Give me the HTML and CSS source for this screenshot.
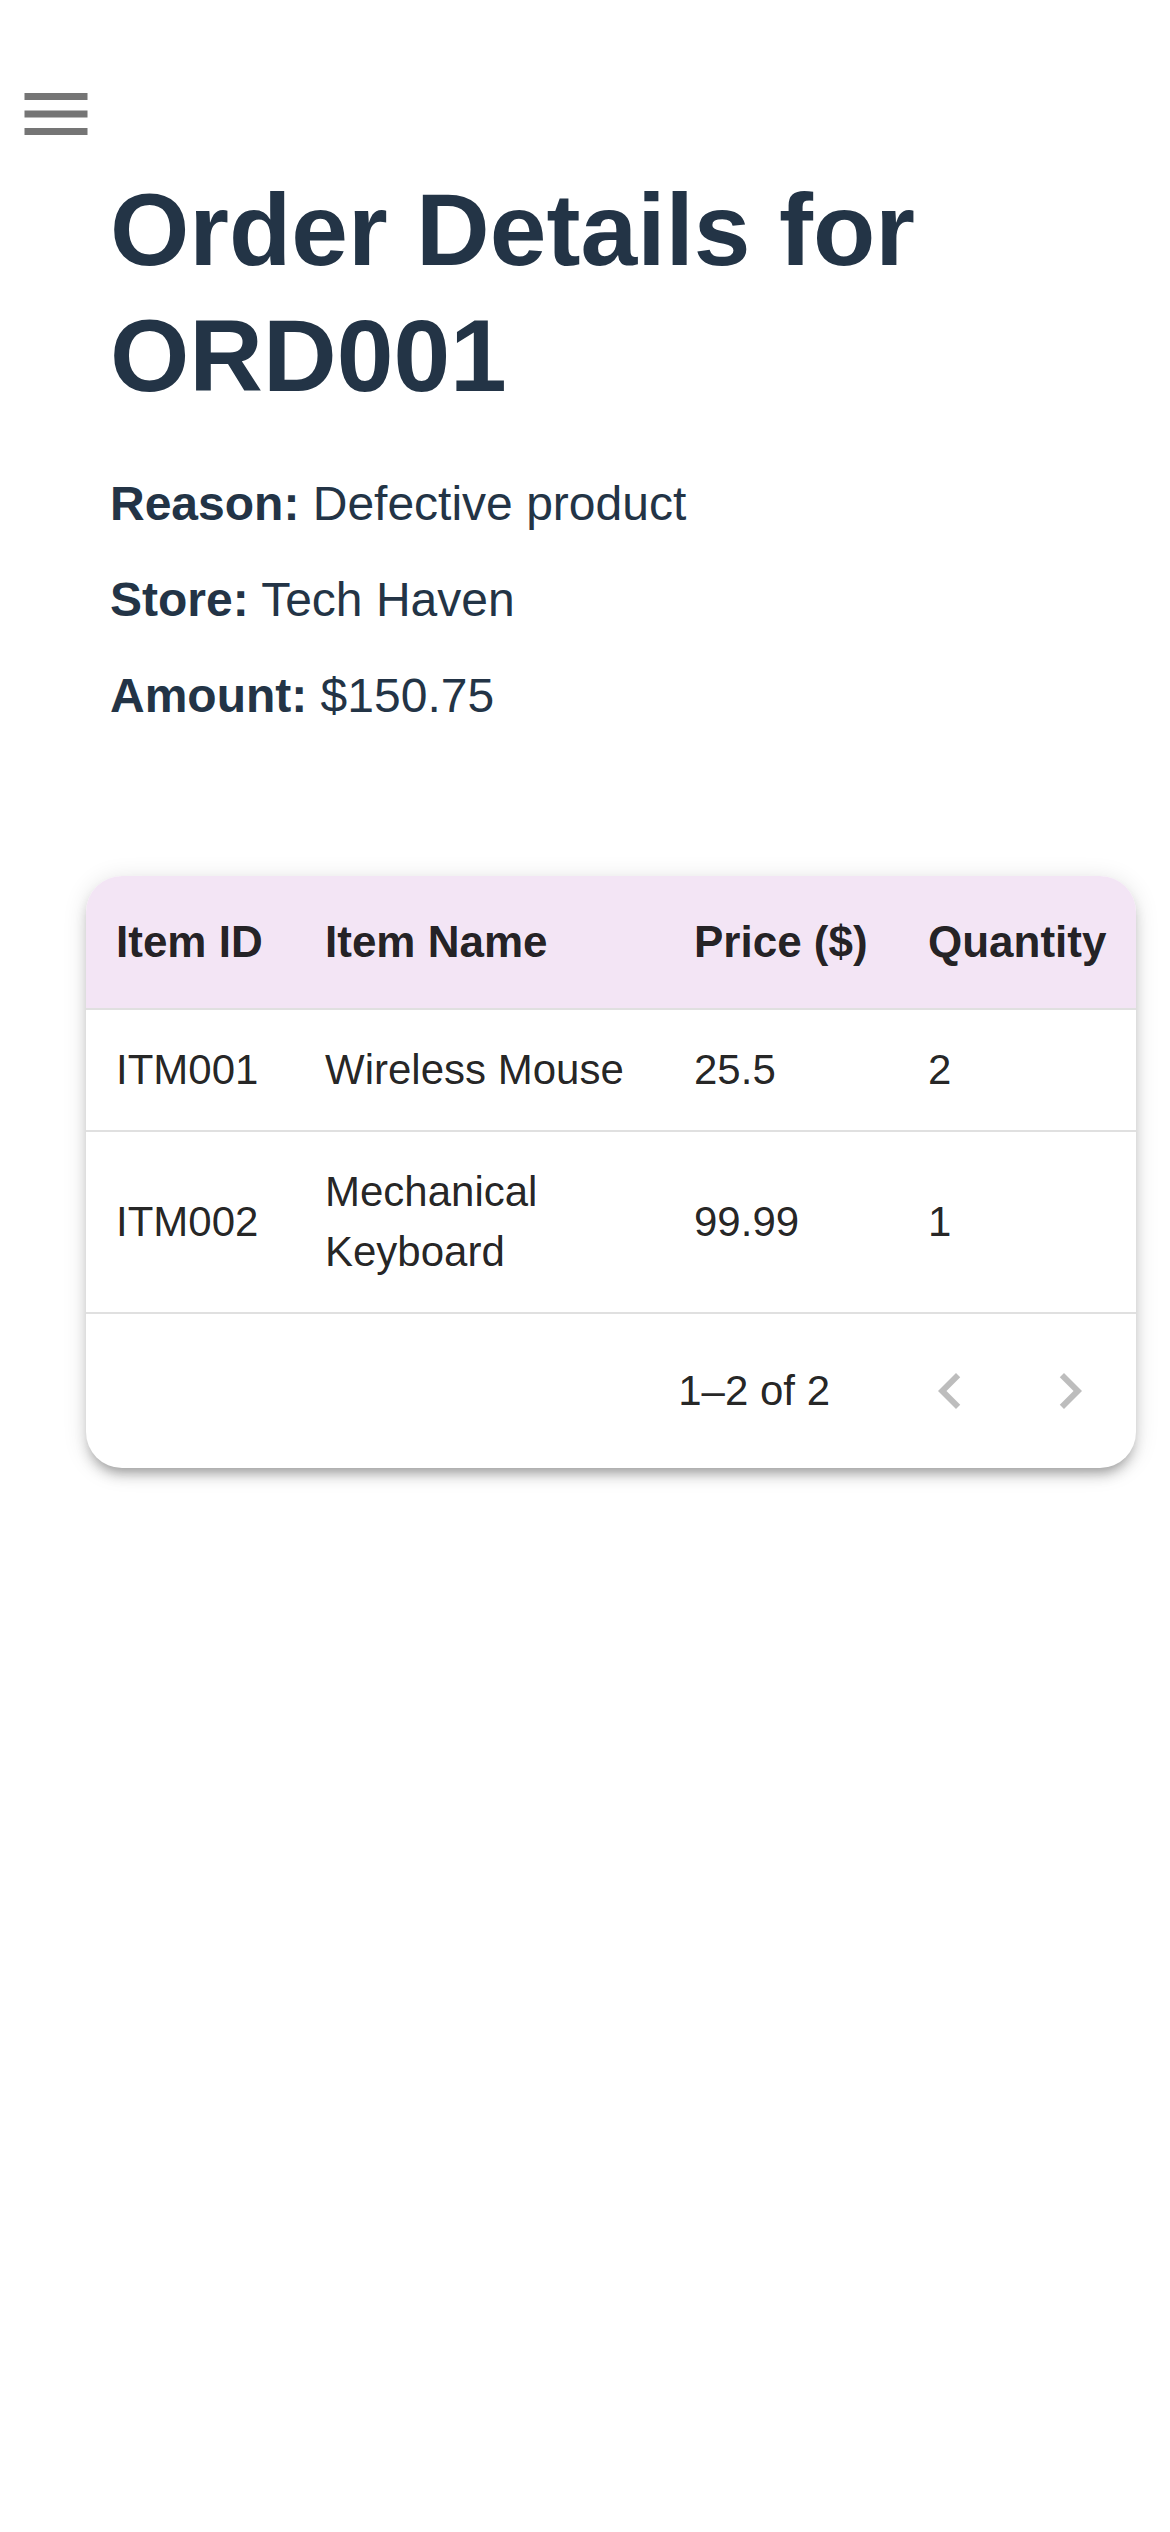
FILE: index.html
```html
<!DOCTYPE html>
<html lang="en">
<head>
<meta charset="utf-8">
<title>Order Details for ORD001</title>
<link rel="stylesheet" href="styles.css">
</head>
<body>
  <header class="topbar">
    <button class="menu-btn" aria-label="Open menu">
      <svg class="menu-icon" viewBox="0 0 24 24" aria-hidden="true"><path d="M3 18h18v-2H3zm0-5h18v-2H3zm0-7v2h18V6z"/></svg>
    </button>
  </header>

  <main class="content">
    <section class="details">
      <h1 class="title">Order Details for ORD001</h1>
      <p class="field"><strong>Reason:</strong> Defective product</p>
      <p class="field"><strong>Store:</strong> Tech Haven</p>
      <p class="field"><strong>Amount:</strong> $150.75</p>
    </section>

    <section class="card">
      <table class="items">
        <colgroup>
          <col class="col-id">
          <col class="col-name">
          <col class="col-price">
          <col class="col-qty">
        </colgroup>
        <thead>
          <tr>
            <th>Item ID</th>
            <th>Item Name</th>
            <th>Price ($)</th>
            <th>Quantity</th>
          </tr>
        </thead>
        <tbody>
          <tr>
            <td>ITM001</td>
            <td>Wireless Mouse</td>
            <td>25.5</td>
            <td>2</td>
          </tr>
          <tr>
            <td>ITM002</td>
            <td>Mechanical Keyboard</td>
            <td>99.99</td>
            <td>1</td>
          </tr>
        </tbody>
      </table>
      <div class="pagination">
        <span class="range">1–2 of 2</span>
        <div class="actions">
          <button class="page-btn" disabled aria-label="Previous page">
            <svg viewBox="0 0 24 24" aria-hidden="true"><path d="M15.41 16.59 10.83 12l4.58-4.59L14 6l-6 6 6 6z"/></svg>
          </button>
          <button class="page-btn" disabled aria-label="Next page">
            <svg viewBox="0 0 24 24" aria-hidden="true"><path d="M8.59 16.59 13.17 12 8.59 7.41 10 6l6 6-6 6z"/></svg>
          </button>
        </div>
      </div>
    </section>
  </main>
</body>
</html>
```

FILE: styles.css
```css
* {
  box-sizing: border-box;
}

html, body {
  margin: 0;
  padding: 0;
  background: #ffffff;
}

body {
  font-family: "Liberation Sans", Arial, Helvetica, sans-serif;
  color: #233446;
  min-height: 2532px;
}

.topbar {
  padding: 72px 0 0 14px;
  display: flex;
}

.menu-btn {
  border: 0;
  padding: 0;
  margin: 0;
  background: none;
  display: block;
  cursor: pointer;
}

.menu-icon {
  width: 84px;
  height: 84px;
  display: block;
  fill: #757575;
}

.content {
  padding: 0 34px 0 86px;
}

.details {
  padding: 0 0 0 24px;
}

.title {
  margin: 11px 0 49px;
  font-size: 102px;
  line-height: 126px;
  font-weight: 700;
  color: #233446;
}

.field {
  margin: 0 0 24px;
  font-size: 48px;
  line-height: 72px;
  color: #233446;
}

.field:last-child {
  margin-bottom: 0;
}

.field strong {
  font-weight: 700;
}

.card {
  margin-top: 144px;
  background: #ffffff;
  border-radius: 36px;
  overflow: hidden;
  box-shadow: 0 9px 9px -6px rgba(0, 0, 0, 0.2),
              0 9px 12px 0 rgba(0, 0, 0, 0.14),
              0 3px 24px 0 rgba(0, 0, 0, 0.12);
}

.items {
  width: 100%;
  table-layout: fixed;
  border-collapse: collapse;
  color: rgba(0, 0, 0, 0.87);
}

.col-id { width: 209px; }
.col-name { width: 369px; }
.col-price { width: 234px; }
.col-qty { width: 238px; }

.items th {
  background: #f3e5f5;
  font-weight: 700;
  font-size: 44px;
  line-height: 72px;
  padding: 30px;
  text-align: left;
  white-space: nowrap;
  border-bottom: 2px solid #e0e0e0;
}

.items td {
  font-size: 42px;
  line-height: 60px;
  padding: 30px;
  text-align: left;
  vertical-align: middle;
  border-bottom: 2px solid #e0e0e0;
}

.pagination {
  height: 154px;
  display: flex;
  align-items: center;
  justify-content: flex-end;
  padding-right: 6px;
  color: rgba(0, 0, 0, 0.87);
}

.range {
  font-size: 42px;
  line-height: 60px;
}

.actions {
  display: flex;
  margin-left: 60px;
}

.page-btn {
  width: 120px;
  height: 120px;
  padding: 24px;
  border: 0;
  background: none;
  display: flex;
  align-items: center;
  justify-content: center;
}

.page-btn svg {
  width: 72px;
  height: 72px;
  display: block;
  fill: rgba(0, 0, 0, 0.26);
}
```
